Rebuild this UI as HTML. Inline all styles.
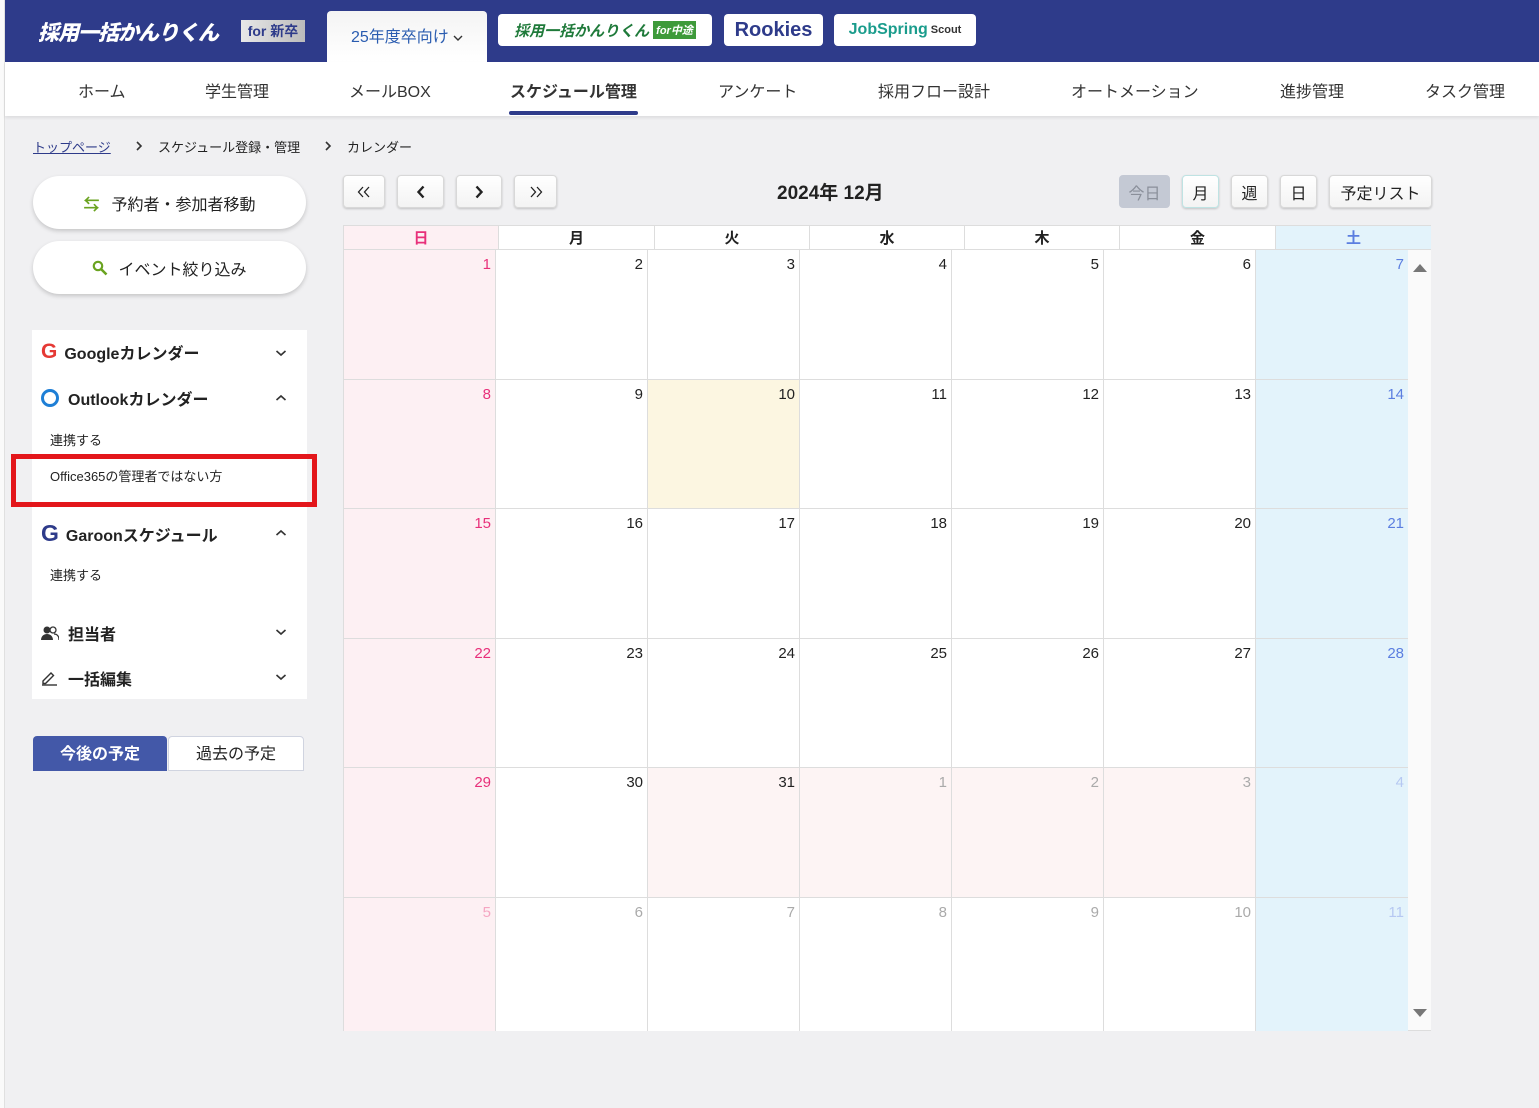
<!DOCTYPE html>
<html><head><meta charset="utf-8">
<style>
*{box-sizing:border-box;margin:0;padding:0}
body{width:1539px;height:1108px;background:#f0f0f2;font-family:"Liberation Sans","Noto Sans CJK JP",sans-serif;color:#222;position:relative;overflow:hidden}
.strip{position:absolute;left:0;top:0;width:5px;height:1108px;background:#fafafa;border-right:1px solid #e0e0e0}
.hdr{position:absolute;left:5px;top:0;right:0;height:62px;background:#2e3b8a}
.nav{position:absolute;left:5px;top:62px;right:0;height:54px;background:#fff;box-shadow:0 2px 3px rgba(0,0,0,.08)}
.nav span{position:absolute;top:16px;font-size:16px;color:#333}
.abs{position:absolute}
.logo{position:absolute;background:#fff;border-radius:4px;top:14px;height:32px;display:flex;align-items:center;justify-content:center;font-weight:bold}
.btn{position:absolute;background:linear-gradient(#fff,#f3f3f3);border:1px solid #d8d8d8;border-radius:4px;box-shadow:0 1px 2px rgba(0,0,0,.2);display:flex;align-items:center;justify-content:center;font-size:16px;color:#222}
.pill{position:absolute;left:33px;width:273px;height:53px;background:#fff;border-radius:27px;box-shadow:0 2px 4px rgba(0,0,0,.18);display:flex;align-items:center;justify-content:center;font-size:16px}
.side{position:absolute;left:32px;top:330px;width:275px;height:369px;background:#fff}
.side .it{position:absolute;left:9px;font-weight:bold;font-size:16px;display:flex;align-items:center}
.side .sub{position:absolute;left:18px;font-size:13px}
.chev{position:absolute;right:20px}
.cal{position:absolute;left:343px;top:225px;width:1088px;height:806px;border:1px solid #ddd;background:#fff}
.dh{position:absolute;top:0;height:24px;border-right:1px solid #ddd;border-bottom:1px solid #ddd;text-align:center;font-weight:bold;font-size:15px;line-height:26px}
.c{position:absolute;border-right:1px solid #ddd;border-bottom:1px solid #ddd;text-align:right;padding:6px 4px 0 0;font-size:15px;color:#222}
</style></head><body>
<div class="strip"></div>
<div class="hdr"></div>
<div class="abs" style="left:38px;top:17px;color:#fff;font-weight:900;font-style:italic;font-size:21px;letter-spacing:-1px">採用一括かんりくん</div>
<div class="abs" style="left:241px;top:20px;width:64px;height:22px;background:linear-gradient(90deg,#e8e8e8,#bbb);color:#2e3b8a;font-weight:bold;font-size:14px;text-align:center;line-height:22px">for 新卒</div>
<div class="abs" style="left:327px;top:11px;width:160px;height:51px;background:linear-gradient(#f4f4f4,#fff);border-radius:4px 4px 0 0;color:#2a5cb0;font-size:16px;padding:12px 0 0 24px">25年度卒向け <svg width="10" height="8" viewBox="0 0 10 8"><path d="M1 2l4 4 4-4" fill="none" stroke="#333" stroke-width="1.4"/></svg></div>
<div class="logo" style="left:498px;width:214px;color:#1f7a3a;font-style:italic;font-size:15px">採用一括かんりくん <span style="background:#3e9a3a;color:#fff;font-size:11px;padding:1px 3px;margin-left:4px">for中途</span></div>
<div class="logo" style="left:724px;width:99px;color:#2e3b8a;font-size:20px">Rookies</div>
<div class="logo" style="left:834px;width:142px;color:#1a9c8c;font-size:16px">JobSpring <span style="font-size:11px;color:#333;margin-left:3px">Scout</span></div>
<div class="nav">
<span style="left:73px">ホーム</span><span style="left:200px">学生管理</span><span style="left:344px">メールBOX</span>
<span style="left:505px;font-weight:bold">スケジュール管理</span><span style="left:713px">アンケート</span><span style="left:873px">採用フロー設計</span>
<span style="left:1066px">オートメーション</span><span style="left:1275px">進捗管理</span><span style="left:1420px">タスク管理</span>
<div class="abs" style="left:504px;top:49px;width:129px;height:4px;background:#2e3b8a;border-radius:2px"></div>
</div>
<div class="abs" style="left:33px;top:137px;font-size:13px;color:#2e3b8a;text-decoration:underline">トップページ</div>
<svg class="abs" style="left:135px;top:141px" width="8" height="10" viewBox="0 0 8 10"><path d="M2 1l4 4-4 4" fill="none" stroke="#333" stroke-width="1.6"/></svg>
<div class="abs" style="left:158px;top:137px;font-size:13px">スケジュール登録・管理</div>
<svg class="abs" style="left:324px;top:141px" width="8" height="10" viewBox="0 0 8 10"><path d="M2 1l4 4-4 4" fill="none" stroke="#333" stroke-width="1.6"/></svg>
<div class="abs" style="left:347px;top:137px;font-size:13px">カレンダー</div>
<div class="pill" style="top:176px"><span style="color:#6aa320;margin-right:12px;font-weight:bold">⇆</span>予約者・参加者移動</div>
<div class="pill" style="top:241px"><svg width="16" height="16" viewBox="0 0 16 16" style="margin-right:10px"><circle cx="6" cy="6" r="4.2" fill="none" stroke="#6aa320" stroke-width="2.2"/><path d="M9 9l5.5 5.5" stroke="#6aa320" stroke-width="2.6"/></svg>イベント絞り込み</div>
<div class="side">
<div class="it" style="top:10px"><span style="color:#e53935;font-size:21px;margin-right:7px">G</span>Googleカレンダー</div>
<svg class="chev" style="top:19px" width="12" height="8" viewBox="0 0 12 8"><path d="M1.5 2l4.5 4 4.5-4" fill="none" stroke="#333" stroke-width="1.6"/></svg>
<div class="it" style="top:56px"><span style="display:inline-block;width:18px;height:18px;border:3px solid #1e7fd6;border-radius:50%;margin-right:9px"></span>Outlookカレンダー</div>
<svg class="chev" style="top:64px" width="12" height="8" viewBox="0 0 12 8"><path d="M1.5 6l4.5-4 4.5 4" fill="none" stroke="#333" stroke-width="1.6"/></svg>
<div class="sub" style="top:100px">連携する</div>
<div class="sub" style="top:136px">Office365の管理者ではない方</div>
<div class="it" style="top:190px"><span style="color:#2e3b8a;font-size:23px;margin-right:7px">G</span>Garoonスケジュール</div>
<svg class="chev" style="top:199px" width="12" height="8" viewBox="0 0 12 8"><path d="M1.5 6l4.5-4 4.5 4" fill="none" stroke="#333" stroke-width="1.6"/></svg>
<div class="sub" style="top:235px">連携する</div>
<div class="it" style="top:291px"><svg width="18" height="16" viewBox="0 0 18 16" style="margin-right:9px"><circle cx="6" cy="5" r="3.5" fill="#333"/><path d="M0 15c0-4 3-6 6-6s6 2 6 6z" fill="#333"/><circle cx="12" cy="5" r="3" fill="none" stroke="#333" stroke-width="1.3"/><path d="M13 9c3 0 5 2 5 6" fill="none" stroke="#333" stroke-width="1.3"/></svg>担当者</div>
<svg class="chev" style="top:298px" width="12" height="8" viewBox="0 0 12 8"><path d="M1.5 2l4.5 4 4.5-4" fill="none" stroke="#333" stroke-width="1.6"/></svg>
<div class="it" style="top:336px"><svg width="17" height="16" viewBox="0 0 17 16" style="margin-right:10px"><path d="M2 11l8-8 2.5 2.5-8 8H2z" fill="none" stroke="#333" stroke-width="1.4"/><path d="M1 15h15" stroke="#333" stroke-width="1.4"/></svg>一括編集</div>
<svg class="chev" style="top:343px" width="12" height="8" viewBox="0 0 12 8"><path d="M1.5 2l4.5 4 4.5-4" fill="none" stroke="#333" stroke-width="1.6"/></svg>
</div>
<div class="abs" style="left:11px;top:454px;width:306px;height:53px;border:5px solid #e3161b"></div>
<div class="abs" style="left:33px;top:736px;width:134px;height:35px;background:#4358a8;color:#fff;font-weight:bold;font-size:16px;text-align:center;line-height:37px;border-radius:4px 4px 0 0">今後の予定</div>
<div class="abs" style="left:168px;top:736px;width:136px;height:35px;background:#fff;border:1px solid #d0d4e0;font-size:16px;text-align:center;line-height:35px;border-radius:4px 4px 0 0">過去の予定</div>
<div class="btn" style="left:343px;top:175px;width:42px;height:33px"><svg width="14" height="12" viewBox="0 0 14 12"><path d="M6 1L1.5 6 6 11M12 1L7.5 6 12 11" fill="none" stroke="#222" stroke-width="1.3"/></svg></div>
<div class="btn" style="left:397px;top:175px;width:47px;height:33px"><svg width="10" height="14" viewBox="0 0 10 14"><path d="M7.5 1.5L2.5 7l5 5.5" fill="none" stroke="#222" stroke-width="2.4"/></svg></div>
<div class="btn" style="left:456px;top:175px;width:46px;height:33px"><svg width="10" height="14" viewBox="0 0 10 14"><path d="M2.5 1.5L7.5 7l-5 5.5" fill="none" stroke="#222" stroke-width="2.4"/></svg></div>
<div class="btn" style="left:514px;top:175px;width:43px;height:33px"><svg width="14" height="12" viewBox="0 0 14 12"><path d="M2 1l4.5 5L2 11M8 1l4.5 5L8 11" fill="none" stroke="#222" stroke-width="1.3"/></svg></div>
<div class="abs" style="left:777px;top:178px;font-size:19px;font-weight:bold">2024年 12月</div>
<div class="btn" style="left:1119px;top:175px;width:51px;height:33px;background:#c4c9d4;color:#8a8f9a;border-color:#c4c9d4;box-shadow:none">今日</div>
<div class="btn" style="left:1182px;top:175px;width:37px;height:33px;border-color:#bfe3e3">月</div>
<div class="btn" style="left:1231px;top:175px;width:37px;height:33px">週</div>
<div class="btn" style="left:1280px;top:175px;width:37px;height:33px">日</div>
<div class="btn" style="left:1329px;top:175px;width:103px;height:33px">予定リスト</div>
<div class="cal">
<div class="dh" style="left:0;width:155px;background:#fdf0f3;color:#e8307a">日</div>
<div class="dh" style="left:155px;width:156px">月</div>
<div class="dh" style="left:311px;width:155px">火</div>
<div class="dh" style="left:466px;width:155px">水</div>
<div class="dh" style="left:621px;width:155px">木</div>
<div class="dh" style="left:776px;width:156px">金</div>
<div class="dh" style="left:932px;width:155px;background:#e3f3fb;color:#5b7ee0;border-right:none">土</div>
<div class="abs" style="left:1064px;top:24px;width:23px;height:780px;background:#fafafa"></div>
<div class="abs" style="left:1069px;top:38px;border:7px solid transparent;border-bottom:8px solid #777;border-top:none"></div>
<div class="abs" style="left:1069px;top:783px;border:7px solid transparent;border-top:8px solid #777;border-bottom:none"></div>
<div id="g"></div>
</div>
<script>
(function(){
var tops=[24,154,283,413,542,672,805];
var days=[[1,2,3,4,5,6,7],[8,9,10,11,12,13,14],[15,16,17,18,19,20,21],[22,23,24,25,26,27,28],[29,30,31,1,2,3,4],[5,6,7,8,9,10,11]];
var h='';
for(var r=0;r<6;r++)for(var c=0;c<7;c++){
 var other=(r==4&&c>=3)||r==5;
 var bg='#fff',col='#222';
 if(c==0){bg='#fdf0f3';col=other?'#f5a6c2':'#e8307a';}
 else if(c==6){bg='#e3f3fb';col=other?'#b6c8f2':'#5b7ee0';}
 else if(other){col='#aaa';}
 if(r==1&&c==2)bg='#fcf6e1';
 if(r==4&&c>=2&&c<=5)bg='#fdf4f4';
 h+='<div class="c" style="left:'+(c*152)+'px;top:'+tops[r]+'px;width:152px;height:'+(tops[r+1]-tops[r])+'px;background:'+bg+';color:'+col+(c==6?';border-right:none':'')+(r==5?';border-bottom:none':'')+'">'+days[r][c]+'</div>';
}
document.getElementById('g').innerHTML=h;
})();
</script>
</body></html>
